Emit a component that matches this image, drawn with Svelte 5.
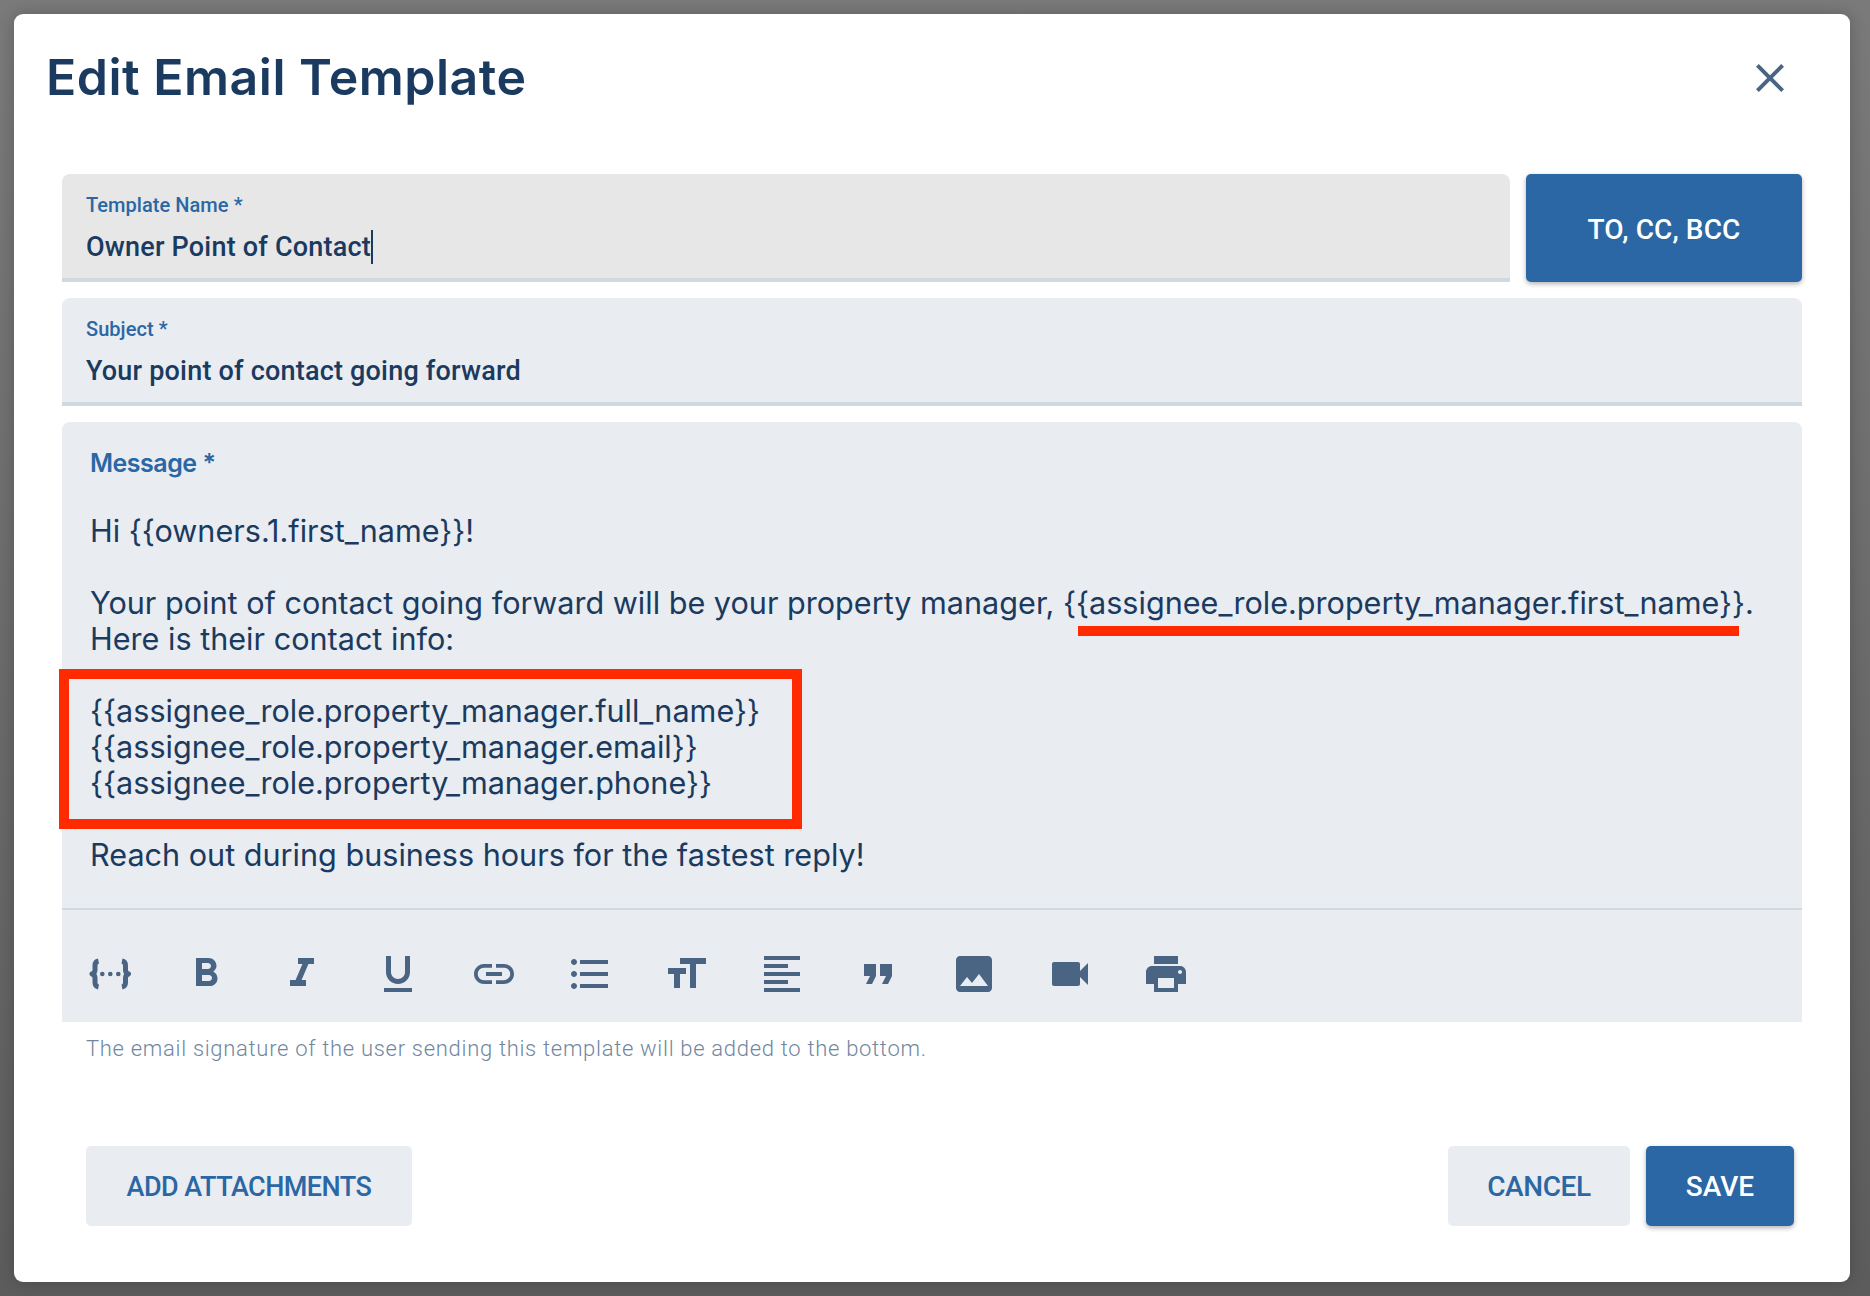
<script>
	const tools = [
		{ name: 'bold', d: 'M15.6 10.79c.97-.67 1.65-1.77 1.65-2.79 0-2.26-1.75-4-4-4H7v14h7.04c2.09 0 3.71-1.7 3.71-3.79 0-1.52-.86-2.82-2.15-3.42zM10 6.5h3c.83 0 1.5.67 1.5 1.5s-.67 1.5-1.5 1.5h-3v-3zm3.5 9H10v-3h3.5c.83 0 1.5.67 1.5 1.5s-.67 1.5-1.5 1.5z' },
		{ name: 'italic', d: 'M10 4v3h2.21l-3.42 8H6v3h8v-3h-2.21l3.42-8H18V4z' },
		{ name: 'underline', d: 'M12 17c3.31 0 6-2.69 6-6V3h-2.5v8c0 1.93-1.57 3.5-3.5 3.5S8.5 12.93 8.5 11V3H6v8c0 3.31 2.69 6 6 6zm-7 2v2h14v-2H5z' },
		{ name: 'link', d: 'M3.9 12c0-1.71 1.39-3.1 3.1-3.1h4V7H7c-2.76 0-5 2.24-5 5s2.24 5 5 5h4v-1.9H7c-1.71 0-3.1-1.39-3.1-3.1zM8 13h8v-2H8v2zm9-6h-4v1.9h4c1.71 0 3.1 1.39 3.1 3.1s-1.39 3.1-3.1 3.1h-4V17h4c2.76 0 5-2.24 5-5s-2.24-5-5-5z' },
		{ name: 'list', d: 'M4 10.5c-.83 0-1.5.67-1.5 1.5s.67 1.5 1.5 1.5 1.5-.67 1.5-1.5-.67-1.5-1.5-1.5zm0-6c-.83 0-1.5.67-1.5 1.5S3.17 7.5 4 7.5 5.5 6.83 5.5 6 4.83 4.5 4 4.5zm0 12c-.83 0-1.5.68-1.5 1.5s.68 1.5 1.5 1.5 1.5-.68 1.5-1.5-.67-1.5-1.5-1.5zM7 19h14v-2H7v2zm0-6h14v-2H7v2zm0-8v2h14V5H7z' },
		{ name: 'size', d: 'M9 4v3h5v12h3V7h5V4H9zm-6 8h3v7h3v-7h3V9H3v3z' },
		{ name: 'align', d: 'M15 15H3v2h12v-2zm0-8H3v2h12V7zM3 13h18v-2H3v2zm0 8h18v-2H3v2zM3 3v2h18V3H3z' },
		{ name: 'quote', d: 'M6 17h3l2-4V7H5v6h3zm8 0h3l2-4V7h-6v6h3z' },
		{ name: 'image', d: 'M21 19V5c0-1.1-.9-2-2-2H5c-1.1 0-2 .9-2 2v14c0 1.1.9 2 2 2h14c1.1 0 2-.9 2-2zM8.5 13.5l2.5 3.01L14.5 12l4.5 6H5l3.5-4.5z' },
		{ name: 'video', d: 'M17 10.5V7c0-.55-.45-1-1-1H4c-.55 0-1 .45-1 1v10c0 .55.45 1 1 1h12c.55 0 1-.45 1-1v-3.5l4 4v-11l-4 4z' },
		{ name: 'print', d: 'M19 8H5c-1.66 0-3 1.34-3 3v6h4v4h12v-4h4v-6c0-1.66-1.34-3-3-3zm-3 11H8v-5h8v5zm3-7c-.55 0-1-.45-1-1s.45-1 1-1 1 .45 1 1-.45 1-1 1zm-1-9H6v4h12V3z' }
	];
</script>

<div class="backdrop">
	<div class="dialog">
		<header class="dialog-head">
			<h1>Edit Email Template</h1>
			<svg class="close" viewBox="0 0 24 24" width="48" height="48">
				<path d="M19 6.41L17.59 5 12 10.59 6.41 5 5 6.41 10.59 12 5 17.59 6.41 19 12 13.41 17.59 19 19 17.59 13.41 12z" />
			</svg>
		</header>

		<div class="form">
			<div class="name-row">
				<div class="field field--focus">
					<div class="field-label">Template Name *</div>
					<div class="field-value">Owner Point of Contact<span class="caret"></span></div>
				</div>
				<button class="btn btn--primary btn--recipients">TO, CC, BCC</button>
			</div>

			<div class="field">
				<div class="field-label">Subject *</div>
				<div class="field-value">Your point of contact going forward</div>
			</div>

			<div class="message">
				<div class="message-label">Message *</div>
				<div class="message-body">
					<p>Hi {'{{'}owners.1.first_name{'}}'}!</p>
					<p>
						Your point of contact going forward will be your property manager, {'{{'}assignee_role.property_manager.first_name{'}}'}.<br />
						Here is their contact info:
						<span class="mark-line"></span>
					</p>
					<p>
						{'{{'}assignee_role.property_manager.full_name{'}}'}<br />
						{'{{'}assignee_role.property_manager.email{'}}'}<br />
						{'{{'}assignee_role.property_manager.phone{'}}'}
						<span class="mark-box"></span>
					</p>
					<p>Reach out during business hours for the fastest reply!</p>
				</div>
				<div class="toolbar">
					<svg class="tool" viewBox="0 0 48 48" width="48" height="48">
						<path class="brace" d="M12.500 11c-3 .6-3.500 2.200-3.500 4.500v4.500c0 2-1 3.400-3 4 2 .6 3 2 3 4v4.500c0 2.300 .5 3.900 3.500 4.500" />
						<path class="brace" d="M36 11c3 .6 3.500 2.200 3.500 4.500v4.500c0 2 1 3.400 3 4-2 .6-3 2-3 4v4.500c0 2.300-.5 3.900-3.500 4.500" />
						<circle cx="16.300" cy="24" r="2.300" />
						<circle cx="24.300" cy="24" r="2.300" />
						<circle cx="32.300" cy="24" r="2.300" />
					</svg>
					{#each tools as t (t.name)}
						<svg class="tool" viewBox="0 0 24 24" width="48" height="48"><path d={t.d} /></svg>
					{/each}
				</div>
			</div>
			<div class="hint">The email signature of the user sending this template will be added to the bottom.</div>
		</div>

		<footer class="dialog-foot">
			<button class="btn btn--soft btn--attach">ADD ATTACHMENTS</button>
			<div class="foot-right">
				<button class="btn btn--soft btn--cancel">CANCEL</button>
				<button class="btn btn--primary btn--save">SAVE</button>
			</div>
		</footer>
	</div>
</div>

<style>
	:global(body) {
		margin: 0;
	}
	.backdrop {
		width: 1870px;
		height: 1296px;
		box-sizing: border-box;
		padding: 14px 20px 14px 14px;
		background: linear-gradient(#7a7a7a, #5c5c5c);
		overflow: hidden;
	}
	.dialog {
		height: 100%;
		display: flex;
		flex-direction: column;
		background: #fff;
		border-radius: 9px;
		box-shadow: 0 0 16px rgba(0, 0, 0, 0.22);
		color: #1a3a5f;
	}
	.dialog-head {
		display: flex;
		align-items: center;
		justify-content: space-between;
		height: 104px;
		padding: 0 56px 0 32px;
		box-sizing: border-box;
		flex-shrink: 0;
		margin-top: 12px;
	}
	h1 {
		margin: -3px 0 0;
		font-family: Inter, sans-serif;
		font-size: 50px;
		font-weight: 600;
		letter-spacing: 0.5px;
		color: #1a3a5f;
	}
	.close {
		fill: #4a6584;
	}
	.form {
		margin-top: 44px;
		padding: 0 48px;
		display: flex;
		flex-direction: column;
		gap: 16px;
	}
	.name-row {
		display: flex;
		gap: 16px;
	}
	.name-row .field {
		flex: 1;
	}
	.field {
		height: 108px;
		box-sizing: border-box;
		padding: 19px 24px 0;
		background: #e9ecf1;
		border-bottom: 4px solid #d0d8e0;
		border-radius: 8px 8px 0 0;
	}
	.field--focus {
		background: #e7e7e7;
	}
	.field-label {
		font-family: Roboto, sans-serif;
		font-size: 20px;
		line-height: 24px;
		font-weight: 500;
		letter-spacing: 0.05px;
		color: #2a67a4;
	}
	.field-value {
		margin-top: 12px;
		font-family: Roboto, sans-serif;
		font-size: 27px;
		line-height: 36px;
		font-weight: 500;
		letter-spacing: 0.2px;
		color: #1a3a5f;
		display: flex;
		align-items: center;
	}
	.caret {
		width: 2px;
		height: 34px;
		background: #1a3a5f;
	}
	.btn {
		border: 0;
		border-radius: 5px;
		font-family: Roboto, sans-serif;
		font-size: 28px;
		font-weight: 500;
		padding: 0;
	}
	.btn--primary {
		background: #2a67a4;
		color: #fff;
		box-shadow: 0 2px 5px rgba(0, 0, 0, 0.3);
	}
	.btn--soft {
		background: #e9ecf1;
		color: #2a67a4;
	}
	.btn--recipients {
		width: 276px;
		height: 108px;
		padding-top: 2px;
		letter-spacing: 0.1px;
	}
	.message {
		height: 600px;
		background: #e9ecf1;
		border-radius: 8px 8px 0 0;
		display: flex;
		flex-direction: column;
	}
	.message-label {
		padding: 23px 0 0 28px;
		font-family: Inter, sans-serif;
		font-size: 25px;
		line-height: 36px;
		font-weight: 600;
		letter-spacing: -0.5px;
		color: #2a67a4;
	}
	.message-body {
		padding: 32px 28px 0;
		height: 427px;
		box-sizing: border-box;
		font-family: Inter, sans-serif;
		font-size: 30.6px;
		line-height: 36px;
		color: #1a3a5f;
	}
	.message-body p {
		margin: 0 0 36px;
		position: relative;
	}
	.mark-line {
		position: absolute;
		left: 988px;
		top: 41px;
		width: 661px;
		height: 10px;
		background: #ff2a00;
	}
	.mark-box {
		position: absolute;
		left: -31px;
		top: -24px;
		width: 743px;
		height: 160px;
		box-sizing: border-box;
		border: 10px solid #ff2a00;
	}
	.toolbar {
		flex: 1;
		display: flex;
		gap: 48px;
		padding: 40px 24px 24px;
		border-top: 2px solid #d0d8e0;
		box-sizing: border-box;
	}
	.tool {
		fill: #4a6584;
		flex-shrink: 0;
	}
	.tool circle {
		fill: #4a6584;
	}
	.brace {
		stroke: #4a6584;
		stroke-width: 5;
		stroke-linejoin: round;
		fill: none;
	}
	.hint {
		margin-top: -2px;
		padding-left: 24px;
		font-family: Roboto, sans-serif;
		font-size: 22px;
		line-height: 26px;
		font-weight: 300;
		letter-spacing: 0.7px;
		color: #71879f;
	}
	.dialog-foot {
		margin-top: auto;
		padding: 0 56px 56px 72px;
		display: flex;
		justify-content: space-between;
	}
	.foot-right {
		display: flex;
		gap: 16px;
	}
	.btn--attach {
		width: 326px;
		height: 80px;
		padding-top: 1px;
		font-size: 27px;
		letter-spacing: -0.53px;
	}
	.btn--cancel {
		width: 182px;
		height: 80px;
		letter-spacing: -0.4px;
	}
	.btn--save {
		width: 148px;
		height: 80px;
	}
</style>
